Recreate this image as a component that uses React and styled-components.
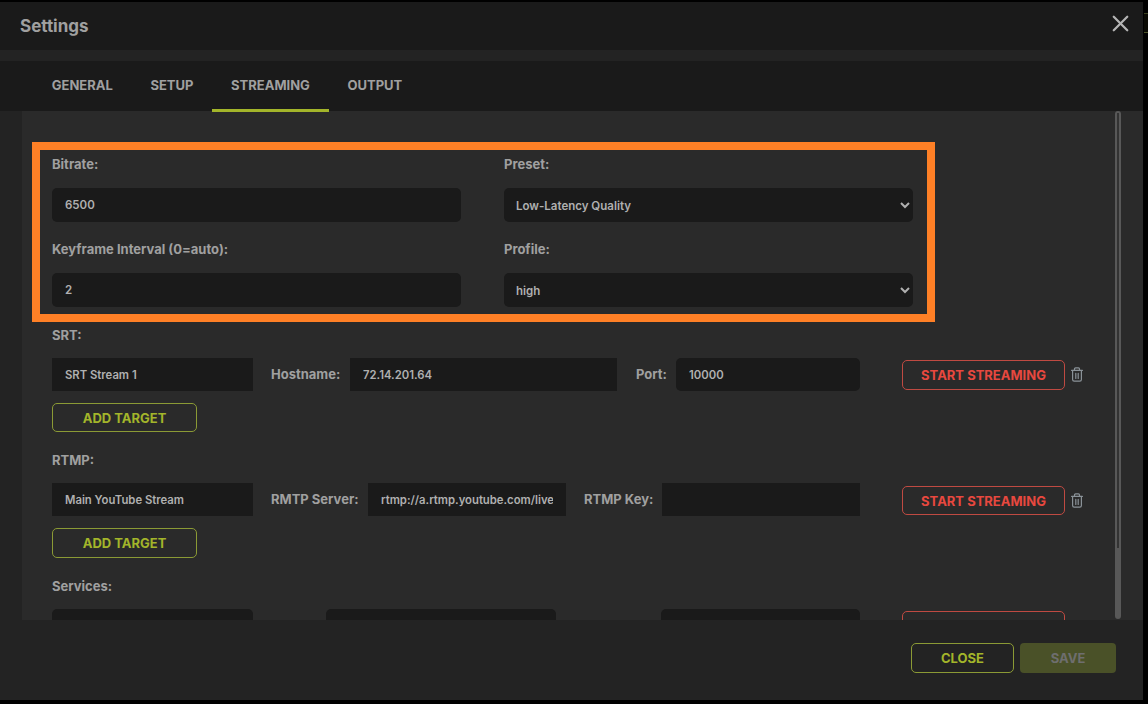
import React from "react";
import styled, { createGlobalStyle } from "styled-components";
import { X } from "lucide-react";

const Global = createGlobalStyle`
  html, body { margin: 0; padding: 0; background: #000; height: 704px; overflow: hidden; }
  body { font-family: Inter, "Liberation Sans", sans-serif; }
  * { box-sizing: border-box; }
`;

const Modal = styled.div`
  width: 1143px; height: 698px; margin: 2px 0 0 0; background: #232323;
  display: flex; flex-direction: column; position: relative; overflow: hidden;
`;
const BackdropPeek = styled.div`
  position: absolute; left: 1144px; top: 13px; width: 4px; height: 20px;
  border-top: 1px solid #3a3f1e; border-bottom: 1px solid #4a5128; background: #0a0a04;
`;
const Header = styled.div`
  height: 48px; flex: none; background: #1a1a1a; display: flex; align-items: center; justify-content: space-between;
  padding: 0 9px 0 20px; color: #a0a0a0; font-size: 17px; font-weight: 700;
`;
const CloseX = styled.div`display: flex; color: #b4b4b4; margin-top: -5px;`;
const Tabs = styled.div`
  height: 50px; flex: none; margin-top: 11px; background: #1a1a1a; display: flex; padding-left: 33px; position: relative; z-index: 1;
`;
const Tab = styled.div`
  padding: 0 18.8px; height: 51px; line-height: 48px; font-size: 13px; font-weight: 700; color: #a0a0a0;
  border-bottom: 3px solid ${p => (p.$active ? "#a3b52a" : "transparent")};
`;
const Body = styled.div`
  height: 509px; flex: none; display: flex; padding-left: 22px; overflow: hidden;
`;
const Scroll = styled.div`
  flex: 1; background: #2a2a2a; padding: 0 30px; position: relative; overflow: hidden;
`;
const Track = styled.div`
  position: absolute; right: 22px; top: 0; width: 6px; height: 508px; border-radius: 3px; background: #585858;
`;
const Thumb = styled.div`
  margin: 2px auto 0; width: 2px; height: 435px; background: #333;
`;
const Highlight = styled.div`
  position: absolute; left: 10px; top: 31px; width: 903px; height: 180px; border: 8px solid #ff8026; pointer-events: none;
`;
const Grid = styled.div`
  width: 861px; padding-top: 45px; display: grid; grid-template-columns: 409px 409px; column-gap: 43px;
`;
const Field = styled.div`height: 85px;`;
const Label = styled.div`
  font-size: 13px; font-weight: 700; color: #a0a0a0; line-height: 18px; margin-bottom: 14px;
`;
const FieldLabel = styled(Label)`line-height: 16px; margin-bottom: 16px;`;
const BigInput = styled.input`
  display: block; width: 100%; height: 34px; background: #1a1a1a; border-radius: 5px; border: 0; outline: 0;
  padding: 0 13px; color: #b0b0b0; font: 600 11.5px Inter, "Liberation Sans", sans-serif;
`;
const Select = styled.select`
  display: block; width: 100%; height: 34px; background: #1a1a1a; border-radius: 5px; border: 0; outline: 0;
  padding: 2px 8px 0; color: #b0b0b0; font: 600 11.5px Inter, "Liberation Sans", sans-serif;
`;
const Section = styled.div`margin-top: ${p => p.$top}px;`;
const Row = styled.div`display: flex; align-items: flex-start; height: 33px;`;
const Input = styled.input`
  display: block; width: ${p => p.$w}px; height: 33px; background: #1a1a1a; border-radius: ${p => (p.$round ? 5 : 0)}px; flex: none; border: 0; outline: 0;
  padding: 1px 13px 0; color: #b0b0b0; font: 600 11.3px Inter, "Liberation Sans", sans-serif; margin-right: ${p => p.$mr || 0}px;
`;
const InlineLabel = styled.div`
  width: ${p => p.$w}px; flex: none; padding-left: ${p => p.$pl || 18}px; font-size: 13px; font-weight: 700; color: #a0a0a0; line-height: 33px;
`;
const OutlineBtn = styled.div`
  flex: none; width: ${p => p.$w}px; height: ${p => p.$h}px; margin-top: ${p => p.$mt || 0}px; border: 1px solid ${p => p.$c}; border-radius: 5px; color: ${p => p.$t};
  display: flex; align-items: center; justify-content: center; font-size: 13px; font-weight: 700;
`;
const Trash = styled.svg`flex: none; margin-left: 6px; margin-top: ${p => p.$mt}px;`;
const AddWrap = styled.div`margin-top: 12px;`;
const Footer = styled.div`
  flex: 1; background: #232323; display: flex; justify-content: flex-end; gap: 6px; padding: 23px 27px 0 0;
`;
const SaveBtn = styled.div`
  width: 96px; height: 30px; border-radius: 4px; background: #4a5128; color: #6e6e6e; display: flex; align-items: center; justify-content: center;
  font-size: 13px; font-weight: 700;
`;

const Start = ({ mt, h }) => (
  <OutlineBtn $w={163} $h={h} $mt={mt} $c="#c04a42" $t="#e8483f">START STREAMING</OutlineBtn>
);
const TrashIcon = ({ mt }) => (
  <Trash $mt={mt} width="12" height="15" viewBox="0 0 12 15" fill="none" stroke="#8a9298" strokeWidth="1.2" strokeLinecap="round" strokeLinejoin="round">
    <path d="M.6 3.4h10.8M3.5 3.4V1.9a1 1 0 0 1 1-1h3a1 1 0 0 1 1 1v1.5M1.6 3.4V12.6a1.6 1.6 0 0 0 1.6 1.6h5.6a1.6 1.6 0 0 0 1.6-1.6V3.4M4.8 6.4v5M7.2 6.4v5" />
  </Trash>
);
const Add = ({ h }) => (
  <AddWrap><OutlineBtn $w={145} $h={h} $c="#8b9a35" $t="#a3b52a">ADD TARGET</OutlineBtn></AddWrap>
);

export default function App() {
  return (
    <>
      <Global />
      <BackdropPeek />
      <Modal>
        <Header>
          <span>Settings</span>
          <CloseX><X size={27} strokeWidth={2} /></CloseX>
        </Header>
        <Tabs>
          <Tab>GENERAL</Tab>
          <Tab>SETUP</Tab>
          <Tab $active>STREAMING</Tab>
          <Tab>OUTPUT</Tab>
        </Tabs>
        <Body>
          <Scroll>
            <Grid>
              <Field><FieldLabel>Bitrate:</FieldLabel><BigInput readOnly value="6500" /></Field>
              <Field><FieldLabel>Preset:</FieldLabel><Select defaultValue="Low-Latency Quality"><option>Low-Latency Quality</option></Select></Field>
              <Field><FieldLabel>Keyframe Interval (0=auto):</FieldLabel><BigInput readOnly value="2" /></Field>
              <Field><FieldLabel>Profile:</FieldLabel><Select defaultValue="high"><option>high</option></Select></Field>
            </Grid>
            <Section $top={0}>
              <Label>SRT:</Label>
              <Row>
                <Input $w={201} readOnly value="SRT Stream 1" />
                <InlineLabel $w={97}>Hostname:</InlineLabel>
                <Input $w={267} readOnly value="72.14.201.64" />
                <InlineLabel $w={59} $pl={19}>Port:</InlineLabel>
                <Input $w={184} $mr={42} $round readOnly value="10000" />
                <Start mt={2} h={30} />
                <TrashIcon mt={9} />
              </Row>
              <Add h={29} />
            </Section>
            <Section $top={19}>
              <Label>RTMP:</Label>
              <Row>
                <Input $w={201} readOnly value="Main YouTube Stream" />
                <InlineLabel $w={115}>RMTP Server:</InlineLabel>
                <Input $w={198} readOnly value="rtmp://a.rtmp.youtube.com/live2" />
                <InlineLabel $w={96}>RTMP Key:</InlineLabel>
                <Input $w={198} $mr={42} readOnly value="" />
                <Start mt={3} h={29} />
                <TrashIcon mt={10} />
              </Row>
              <Add h={30} />
            </Section>
            <Section $top={19}>
              <Label>Services:</Label>
              <Row>
                <Input $w={201} $round readOnly value="" />
                <InlineLabel $w={73} />
                <Input $w={230} $round readOnly value="" />
                <InlineLabel $w={105} />
                <Input $w={199} $mr={42} $round readOnly value="" />
                <OutlineBtn $w={163} $h={30} $mt={2} $c="#c04a42" $t="transparent" />
              </Row>
            </Section>
            <Track><Thumb /></Track>
            <Highlight />
          </Scroll>
        </Body>
        <Footer>
          <OutlineBtn $w={103} $h={30} $c="#8b9a35" $t="#a3b52a">CLOSE</OutlineBtn>
          <SaveBtn>SAVE</SaveBtn>
        </Footer>
      </Modal>
    </>
  );
}
